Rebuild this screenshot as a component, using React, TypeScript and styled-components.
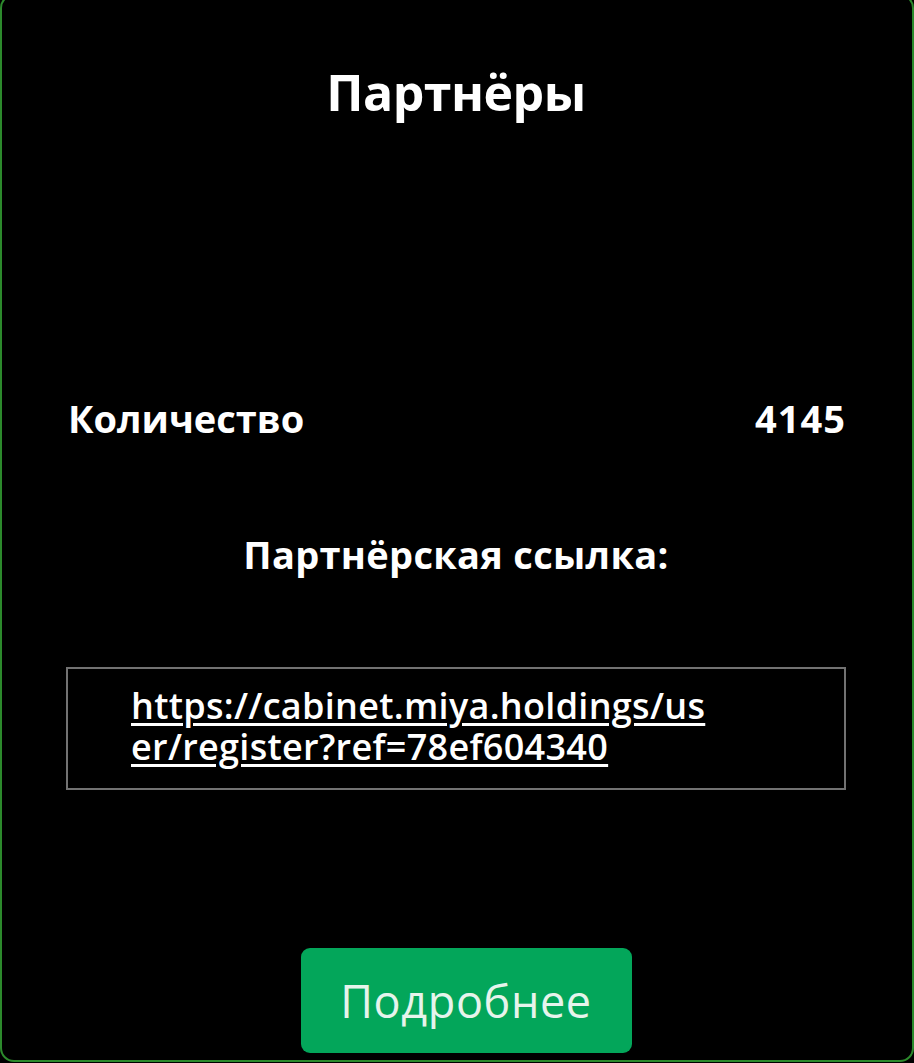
import React from "react";
import styled, { createGlobalStyle } from "styled-components";

const Global = createGlobalStyle`
  html, body { margin: 0; padding: 0; background: #000; }
  body { font-family: "Open Sans", "Noto Sans", sans-serif; color: #fff; overflow: hidden; }
`;

const Card = styled.section`
  box-sizing: border-box;
  margin-top: -6px;
  height: 1068px;
  width: 914px;
  border: 2px solid #2c8a2c;
  border-radius: 14px;
  background: #000;
  padding: 0 66px 0 64px;
  display: flex;
  flex-direction: column;
`;

const Title = styled.h1`
  margin: 66px 0 0;
  text-align: center;
  font-size: 50px;
  line-height: 60px;
  font-weight: 700;
  letter-spacing: -0.5px;
`;

const Row = styled.div`
  margin-top: 272px;
  display: flex;
  justify-content: space-between;
  align-items: baseline;
  font-size: 38px;
  line-height: 48px;
  font-weight: 700;
  padding: 0 0 0 2px;
`;

const Value = styled.span`
  letter-spacing: 1px;
`;

const Subtitle = styled.h2`
  margin: 88px 0 0;
  text-align: center;
  font-size: 38px;
  line-height: 48px;
  font-weight: 700;
  letter-spacing: 0.3px;
`;

const LinkBox = styled.div`
  box-sizing: border-box;
  margin-top: 89px;
  height: 123px;
  border: 2px solid #727272;
  padding: 16px 20px 0 63px;
`;

const Link = styled.a`
  color: #fff;
  font-size: 36px;
  line-height: 41px;
  font-weight: 600;
  letter-spacing: 0.3px;
  text-decoration: underline;
  text-underline-offset: 4px;
  text-decoration-thickness: 3px;
`;

const Button = styled.button`
  align-self: center;
  margin: 158px 0 0 20px;
  width: 331px;
  height: 105px;
  border: none;
  border-radius: 9px;
  background: #03a65a;
  color: #e6f4ec;
  font-family: "Open Sans", "Noto Sans", sans-serif;
  font-size: 45px;
  letter-spacing: 0.6px;
  font-weight: 400;
  cursor: pointer;
`;

export default function App() {
  return (
    <>
      <Global />
      <Card>
        <Title>Партнёры</Title>
        <Row>
          <span>Количество</span>
          <Value>4145</Value>
        </Row>
        <Subtitle>Партнёрская ссылка:</Subtitle>
        <LinkBox>
          <Link href="#">
            https://cabinet.miya.holdings/us
            <br />
            er/register?ref=78ef604340
          </Link>
        </LinkBox>
        <Button>Подробнее</Button>
      </Card>
    </>
  );
}
